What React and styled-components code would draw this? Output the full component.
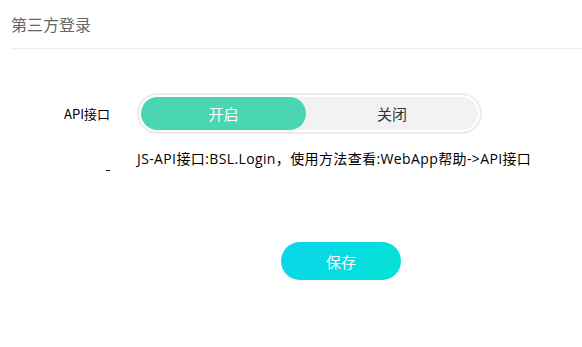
import React from "react";
import styled, { createGlobalStyle } from "styled-components";

const Global = createGlobalStyle`
  html, body { margin: 0; padding: 0; background: #fff; }
  body { font-family: "Noto Sans CJK SC", "Open Sans", sans-serif; color: #000; }
`;

const Page = styled.div`
  width: 582px;
  height: 347px;
  overflow: hidden;
`;

const Header = styled.div`
  margin-left: 11px;
  height: 48px;
  border-bottom: 1px solid #eeeeee;
  display: flex;
  align-items: center;
`;

const Title = styled.span`
  font-size: 16px;
  color: #666;
  line-height: 16px;
  margin-top: -1px;
`;

const Form = styled.div`
  display: flex;
  flex-direction: column;
  padding-top: 44px;
`;

const Row = styled.div`
  display: grid;
  grid-template-columns: 110px 1fr;
  column-gap: 27px;
  align-items: ${(p) => p.$align || "center"};
  margin-top: ${(p) => p.$mt || 0}px;
`;

const Label = styled.div`
  text-align: right;
  font-size: 13px;
  color: #000;
`;

const Dash = styled.div`
  justify-self: end;
  width: 4px;
  height: 1px;
  background: #111;
  margin-top: 20px;
`;

const Toggle = styled.div`
  width: 345px;
  height: 41px;
  box-sizing: border-box;
  border: 2px solid #ececec;
  border-radius: 21px;
  padding: 2px;
  background: #fff;
`;

const Track = styled.div`
  height: 100%;
  background: #f2f2f2;
  border-radius: 17px;
  display: grid;
  grid-template-columns: 165px 1fr;
`;

const Option = styled.div`
  display: flex;
  align-items: center;
  justify-content: center;
  font-size: 15px;
  border-radius: 17px;
  color: ${(p) => (p.$on ? "#fff" : "#333")};
  background: ${(p) => (p.$on ? "#4ad5b3" : "transparent")};
`;

const Desc = styled.div`
  font-family: "Open Sans", "Noto Sans CJK SC", sans-serif;
  font-size: 14px;
  color: #000;
  line-height: 18px;
  white-space: nowrap;
  letter-spacing: 0.38px;
`;

const ButtonRow = styled.div`
  padding-left: 281px;
  margin-top: 71px;
`;

const SaveButton = styled.button`
  width: 120px;
  height: 38px;
  border: none;
  border-radius: 19px;
  background: linear-gradient(135deg, #0bd5ee 0%, #03e3d4 100%);
  color: #fff;
  font-family: inherit;
  font-size: 15px;
  padding: 0;
  cursor: pointer;
`;

export default function App() {
  return (
    <Page>
      <Global />
      <Header>
        <Title>第三方登录</Title>
      </Header>
      <Form>
        <Row>
          <Label>API接口</Label>
          <Toggle>
            <Track>
              <Option $on>开启</Option>
              <Option>关闭</Option>
            </Track>
          </Toggle>
        </Row>
        <Row $mt={16} $align="start">
          <Dash />
          <Desc>JS-API接口:BSL.Login，使用方法查看:WebApp帮助-&gt;API接口</Desc>
        </Row>
        <ButtonRow>
          <SaveButton>保存</SaveButton>
        </ButtonRow>
      </Form>
    </Page>
  );
}
